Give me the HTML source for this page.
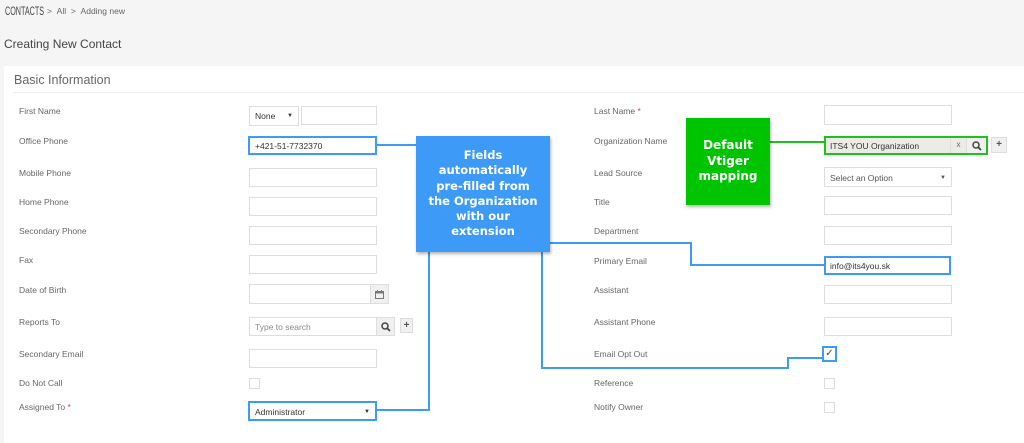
<!DOCTYPE html>
<html><head><style>
body{margin:0;width:1024px;height:443px;background:#f5f5f5;font-family:"Liberation Sans",sans-serif;position:relative;overflow:hidden;color:#555}
.a{position:absolute}
.lbl{position:absolute;font-size:8.5px;color:#666}
.in{position:absolute;background:#fff;border:1px solid #ddd;box-sizing:border-box;height:19px;font-size:8.5px;color:#333;padding:4px 5px}
.hl{border:2px solid #3d9bf7}
.bl{position:absolute;background:#3d9bf7}
.cb{position:absolute;width:11px;height:11px;border:1px solid #ddd;background:#fff;box-sizing:border-box}
.btn{position:absolute;background:#f0f0f0;border:1px solid #ddd;box-sizing:border-box;font-size:10px;text-align:center;color:#555;font-weight:bold}
.btn svg{display:block;margin:auto}
</style></head><body>
<div class="a" style="left:5px;top:4px;font-size:12px;color:#444;width:60px;transform:scaleX(0.6);transform-origin:left;white-space:nowrap">CONTACTS</div>
<div class="a" style="left:47px;top:6px;font-size:8.5px;color:#666">&gt; &nbsp;All &nbsp;&gt; &nbsp;Adding new</div>
<div class="a" style="left:4px;top:37px;font-size:12px;color:#444">Creating New Contact</div>
<div class="a" style="left:4px;top:66px;width:1020px;height:377px;background:#fff"></div>
<div class="a" style="left:14px;top:73px;font-size:12.5px;color:#666">Basic Information</div>
<div class="a" style="left:13px;top:92px;width:1011px;height:1px;background:#eee"></div>

<div class="lbl" style="left:19px;top:106px">First Name</div>
<div class="lbl" style="left:19px;top:136px">Office Phone</div>
<div class="lbl" style="left:19px;top:168px">Mobile Phone</div>
<div class="lbl" style="left:19px;top:197px">Home Phone</div>
<div class="lbl" style="left:19px;top:226px">Secondary Phone</div>
<div class="lbl" style="left:19px;top:255px">Fax</div>
<div class="lbl" style="left:19px;top:285px">Date of Birth</div>
<div class="lbl" style="left:19px;top:317px">Reports To</div>
<div class="lbl" style="left:19px;top:349px">Secondary Email</div>
<div class="lbl" style="left:19px;top:378px">Do Not Call</div>
<div class="lbl" style="left:19px;top:402px">Assigned To <span style="color:#e33">*</span></div>

<div class="in" style="left:249px;top:106px;width:50px;height:20px">None <span style="float:right;font-size:6px;margin-top:2px">▼</span></div>
<div class="in" style="left:301px;top:106px;width:76px;height:19px"></div>
<div class="in hl" style="left:248px;top:136px;width:129px;height:19px;padding:3px 5px">+421-51-7732370</div>
<div class="in" style="left:249px;top:168px;width:128px"></div>
<div class="in" style="left:249px;top:197px;width:128px"></div>
<div class="in" style="left:249px;top:226px;width:128px"></div>
<div class="in" style="left:249px;top:255px;width:128px"></div>
<div class="in" style="left:249px;top:284px;width:122px;height:20px"></div>
<div class="btn" style="left:370px;top:284px;width:19px;height:20px;padding-top:5px"><svg width="9" height="9" viewBox="0 0 9 9"><rect x="0.5" y="1.5" width="8" height="7" fill="none" stroke="#777"/><rect x="0.5" y="1.5" width="8" height="2" fill="#777"/><rect x="2" y="0" width="1" height="2" fill="#777"/><rect x="6" y="0" width="1" height="2" fill="#777"/></svg></div>
<div class="in" style="left:249px;top:317px;width:128px;height:19px;color:#888">Type to search</div>
<div class="btn" style="left:376px;top:317px;width:19px;height:19px;padding-top:4px"><svg width="10" height="10" viewBox="0 0 10 10"><circle cx="4" cy="4" r="3" fill="none" stroke="#444" stroke-width="1.5"/><path d="M6.2 6.2L9 9" stroke="#444" stroke-width="1.8"/></svg></div>
<div class="btn" style="left:400px;top:318px;width:13px;height:15px;padding-top:1px">+</div>
<div class="in" style="left:249px;top:349px;width:128px"></div>
<div class="cb" style="left:249px;top:378px"></div>
<div class="in hl" style="left:248px;top:401px;width:129px;height:20px;padding:4px 5px">Administrator<span style="float:right;font-size:6px;margin-top:2px">▼</span></div>

<div class="lbl" style="left:594px;top:106px">Last Name <span style="color:#e33">*</span></div>
<div class="lbl" style="left:594px;top:136px">Organization Name</div>
<div class="lbl" style="left:594px;top:168px">Lead Source</div>
<div class="lbl" style="left:594px;top:197px">Title</div>
<div class="lbl" style="left:594px;top:226px">Department</div>
<div class="lbl" style="left:594px;top:256px">Primary Email</div>
<div class="lbl" style="left:594px;top:285px">Assistant</div>
<div class="lbl" style="left:594px;top:317px">Assistant Phone</div>
<div class="lbl" style="left:594px;top:349px">Email Opt Out</div>
<div class="lbl" style="left:594px;top:378px">Reference</div>
<div class="lbl" style="left:594px;top:402px">Notify Owner</div>

<div class="in" style="left:824px;top:105px;width:128px;height:20px"></div>
<div class="in" style="left:824px;top:136px;width:164px;height:19px;border:2px solid #1ec21e;background:#ecebe6;padding:3px 4px">ITS4 YOU Organization</div>
<div class="a" style="left:950px;top:138px;width:16px;height:15px;font-size:8px;text-align:center;padding-top:2px;color:#666;border-left:1px solid #ddd;box-sizing:border-box">x</div>
<div class="btn" style="left:966px;top:138px;width:20px;height:15px;border:none;border-left:1px solid #ddd;padding-top:3px"><svg width="10" height="10" viewBox="0 0 10 10"><circle cx="4" cy="4" r="3" fill="none" stroke="#444" stroke-width="1.5"/><path d="M6.2 6.2L9 9" stroke="#444" stroke-width="1.8"/></svg></div>
<div class="btn" style="left:991px;top:137px;width:16px;height:16px;padding-top:1px">+</div>
<div class="in" style="left:824px;top:167px;width:128px;height:20px;padding:5px 5px;color:#555">Select an Option<span style="float:right;font-size:6px;margin-top:2px">▼</span></div>
<div class="in" style="left:824px;top:196px;width:128px"></div>
<div class="in" style="left:824px;top:226px;width:128px"></div>
<div class="in hl" style="left:824px;top:256px;width:127px;height:19px;padding:3px 4px">info@its4you.sk</div>
<div class="in" style="left:824px;top:285px;width:128px"></div>
<div class="in" style="left:824px;top:317px;width:128px"></div>
<div class="a" style="left:822px;top:346px;width:15px;height:16px;border:2px solid #3d9bf7;box-sizing:border-box;background:#fff;font-size:10px;color:#444;text-align:center;line-height:11px">✓</div>
<div class="cb" style="left:824px;top:378px"></div>
<div class="cb" style="left:824px;top:402px"></div>

<div class="bl" style="left:377px;top:144px;width:40px;height:2px"></div>
<div class="bl" style="left:428px;top:250px;width:2px;height:161px"></div>
<div class="bl" style="left:377px;top:409px;width:53px;height:2px"></div>
<div class="bl" style="left:550px;top:242px;width:142px;height:2px"></div>
<div class="bl" style="left:690px;top:242px;width:2px;height:24px"></div>
<div class="bl" style="left:690px;top:264px;width:134px;height:2px"></div>
<div class="bl" style="left:541px;top:250px;width:2px;height:119px"></div>
<div class="bl" style="left:541px;top:367px;width:248px;height:2px"></div>
<div class="bl" style="left:787px;top:357px;width:2px;height:12px"></div>
<div class="bl" style="left:787px;top:357px;width:36px;height:2px"></div>
<div class="a" style="left:770px;top:141px;width:55px;height:2px;background:#1ec21e"></div>

<div class="a" style="left:416px;top:136px;width:134px;height:116px;background:#3d9bf7;box-shadow:1px 2px 3px rgba(0,0,0,.3);color:#fff;font-weight:bold;font-size:11.5px;line-height:15.3px;text-align:center;padding-top:12px;box-sizing:border-box;font-family:'DejaVu Sans',sans-serif">Fields<br>automatically<br>pre-filled from<br>the Organization<br>with our<br>extension</div>
<div class="a" style="left:686px;top:118px;width:84px;height:87px;background:#00c400;box-shadow:1px 2px 3px rgba(0,0,0,.3);color:#fff;font-weight:bold;font-size:12px;line-height:15.5px;text-align:center;padding-top:20px;box-sizing:border-box;font-family:'DejaVu Sans',sans-serif">Default<br>Vtiger<br>mapping</div>
</body></html>
